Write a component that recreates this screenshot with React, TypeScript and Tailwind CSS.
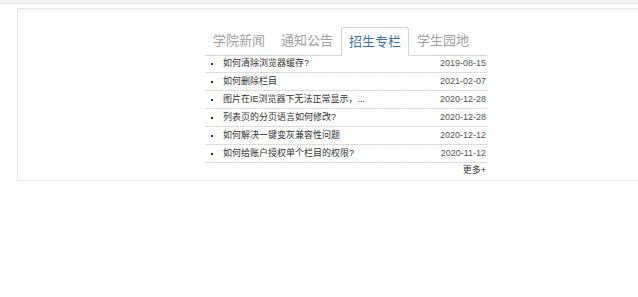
const tabs = ["学院新闻", "通知公告", "招生专栏", "学生园地"];

const news = [
  { title: "如何清除浏览器缓存?", date: "2019-08-15" },
  { title: "如何删除栏目", date: "2021-02-07" },
  { title: "图片在IE浏览器下无法正常显示，...", date: "2020-12-28" },
  { title: "列表页的分页语言如何修改?", date: "2020-12-28" },
  { title: "如何解决一键变灰兼容性问题", date: "2020-12-12" },
  { title: "如何给账户授权单个栏目的权限?", date: "2020-11-12" },
];

export default function App() {
  return (
    <div
      className="min-h-[297px] w-[638px] overflow-hidden bg-white"
      style={{ fontFamily: '"Liberation Sans", "Noto Sans CJK SC", sans-serif' }}
    >
      <div className="h-[4px] border-b border-[#e3e3e3] bg-[#f1f1f1]" />

      <div className="ml-[17px] mt-[4px] h-[173px] w-[660px] border border-[#e6e6e6] shadow-[inset_0_3px_3px_rgba(0,0,0,0.03)]">
        <div className="ml-[187px] w-[282px] pt-[18px]">
          {/* tabs */}
          <div className="flex h-[29px] items-end border-b border-[#d4d4d4]">
            {tabs.map((t, i) =>
              i === 2 ? (
                <div
                  key={t}
                  className="-mb-px flex h-[29px] w-[68px] items-center justify-center rounded-t-[3px] border border-[#d4d4d4] border-b-white bg-white text-[13px] text-[#3574b4]"
                >
                  {t}
                </div>
              ) : (
                <div
                  key={t}
                  className="flex h-[28px] w-[68px] items-center justify-center text-[13px] text-[#a0a0a0]"
                >
                  {t}
                </div>
              )
            )}
          </div>

          {/* list */}
          <ul className="-mt-px">
            {news.map((n) => (
              <li
                key={n.title}
                className="flex h-[18px] items-center bg-[linear-gradient(to_right,#cdcdcd_60%,transparent_60%)] bg-[length:3px_1px] bg-bottom bg-repeat-x pb-px text-[9px] text-[#333]"
              >
                <span className="ml-[6px] mr-[10px] h-[2px] w-[2px] bg-[#333]" />
                <span className="flex-1 truncate">{n.title}</span>
                <span className="pr-px text-[#555]">{n.date}</span>
              </li>
            ))}
          </ul>
          <div className="flex h-[15px] items-center justify-end pr-px text-[9px] text-[#333]">更多+</div>
        </div>
      </div>
    </div>
  );
}
